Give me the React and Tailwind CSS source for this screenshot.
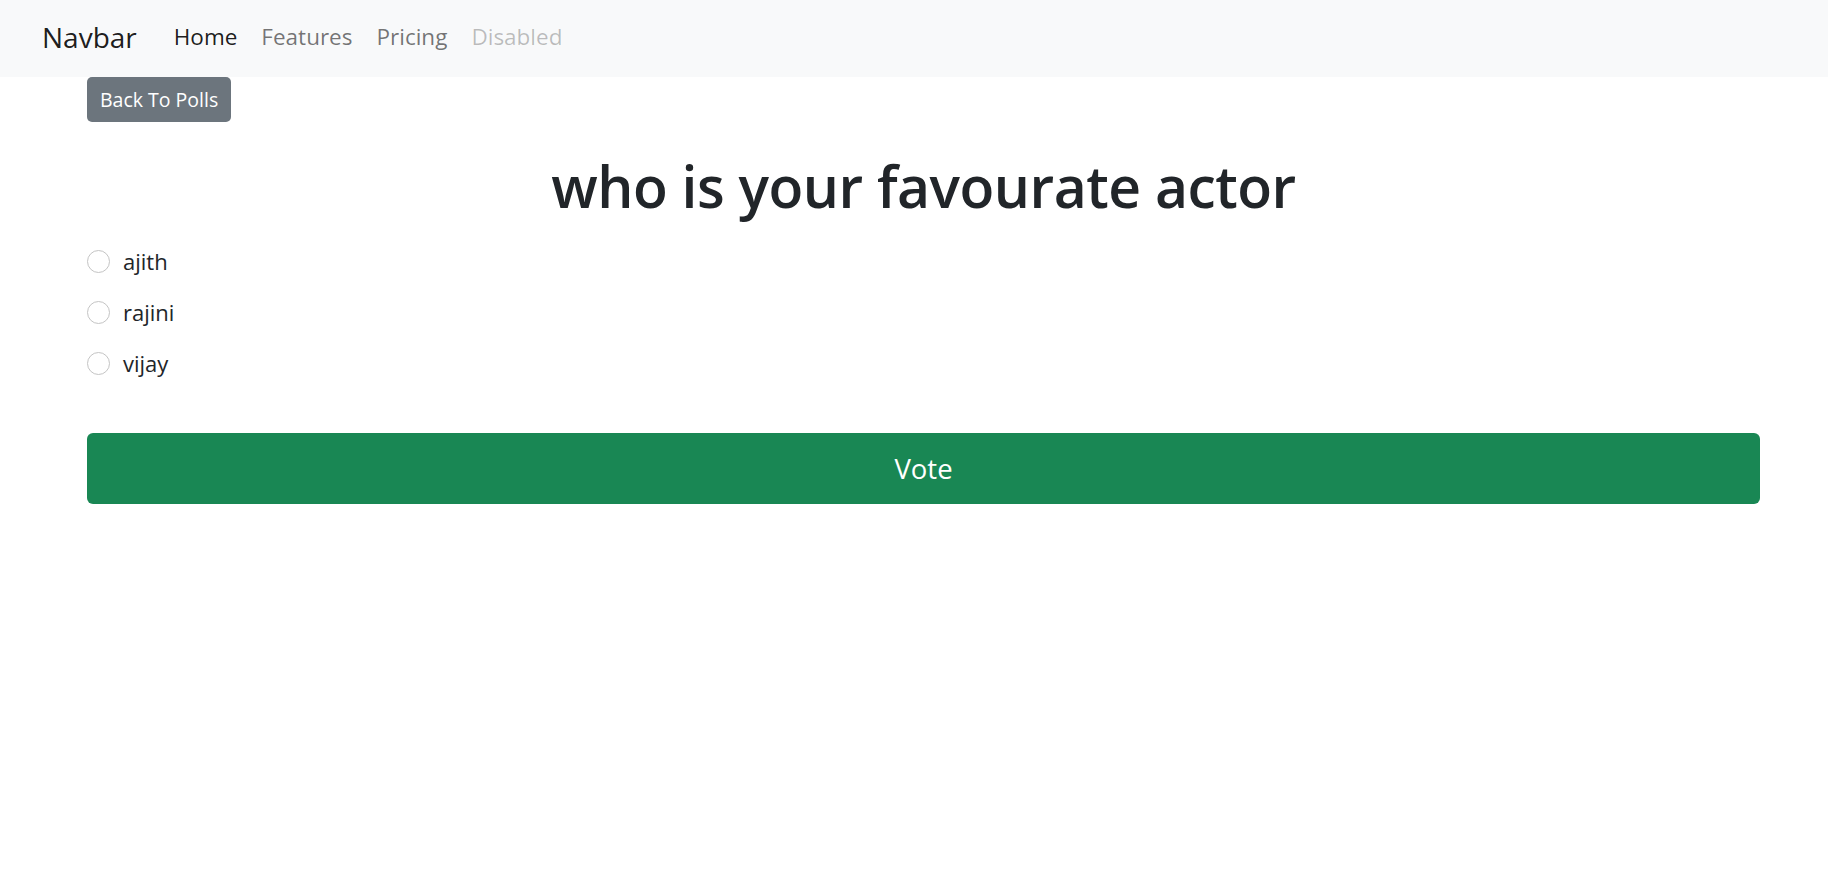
import React, { useState } from "react";

const OPTIONS = ["ajith", "rajini", "vijay"];

export default function App() {
  const [choice, setChoice] = useState("");

  return (
    <div className="min-h-screen bg-white text-[#212529]" style={{ fontFamily: '"Open Sans", "Noto Sans", sans-serif' }}>
      <nav className="h-[77px] pb-[4px] bg-[#f8f9fa] flex items-center px-[42px]">
        <a href="#" className="text-[28px] text-black/90 mr-[37px] leading-none">Navbar</a>
        <div className="flex items-center gap-[24px] text-[22.5px]">
          <a href="#" className="text-black/90">Home</a>
          <a href="#" className="text-black/55">Features</a>
          <a href="#" className="text-black/55">Pricing</a>
          <span className="text-black/25">Disabled</span>
        </div>
      </nav>

      <div className="px-[87px] pr-[68px]">
        <button className="h-[45px] px-[13px] rounded-[5px] bg-[#6c757d] text-white text-[19.5px]">Back To Polls</button>

        <h1 className="mt-[31px] h-[66px] leading-[66px] text-center text-[57px] font-semibold tracking-[-0.5px]">
          who is your favourate actor
        </h1>

        <div className="mt-[26px] flex flex-col gap-[18px]">
          {OPTIONS.map((o) => (
            <label key={o} className="h-[33px] flex items-center gap-[13px] text-[22px] cursor-pointer">
              <input
                type="radio"
                name="poll"
                value={o}
                checked={choice === o}
                onChange={() => setChoice(o)}
                className="appearance-none w-[23px] h-[23px] rounded-full border border-[#c4c4c4] bg-white checked:bg-[#0d6efd] checked:border-[#0d6efd] m-0"
              />
              {o}
            </label>
          ))}
        </div>

        <button className="mt-[53px] w-full h-[71px] rounded-[6px] bg-[#198754] text-white text-[27.5px]">Vote</button>
      </div>
    </div>
  );
}
